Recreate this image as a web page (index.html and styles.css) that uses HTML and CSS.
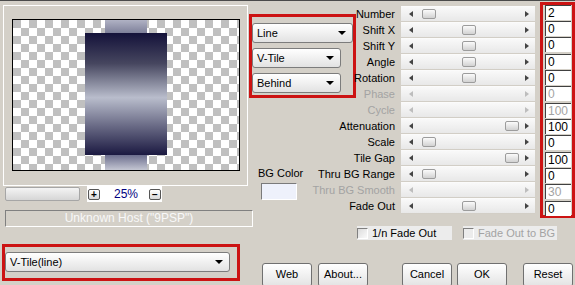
FILE: index.html
```html
<!DOCTYPE html>
<html lang="en">
<head>
    <meta charset="UTF-8">
    <meta name="viewport" content="width=device-width, initial-scale=1.0">
    <title>V-Tile</title>
    <link rel="stylesheet" href="styles.css">
</head>
<body>
    <div class="window">
        <div class="left">
            <div class="preview">
                <div class="canvas">
                    <div class="tile-top"></div>
                    <div class="tile-main"></div>
                    <div class="tile-bottom"></div>
                </div>
            </div>

            <div class="zoom-row">
                <div class="zoom-slider"></div>
                <div class="zoom-box">
                    <span class="zoom-btn">+</span>
                    <span class="zoom-value">25%</span>
                    <span class="zoom-btn zoom-minus">&minus;</span>
                </div>
            </div>

            <div class="host">Unknown Host ("9PSP")</div>

            <div class="mark preset-mark">
                <div class="combo combo-preset">V-Tile(line)</div>
            </div>
        </div>

        <div class="right">
            <div class="params">
                <div class="mid">
                    <div class="mark mode-mark">
                        <div class="combo combo-line">Line</div>
                        <div class="combo combo-short">V-Tile</div>
                        <div class="combo combo-short">Behind</div>
                    </div>
                    <div class="bg-color">
                        <span>BG Color</span>
                        <div class="swatch"></div>
                    </div>
                </div>

                <div class="labels">
                    <div class="label">Number</div>
                    <div class="label">Shift X</div>
                    <div class="label">Shift Y</div>
                    <div class="label">Angle</div>
                    <div class="label">Rotation</div>
                    <div class="label disabled">Phase</div>
                    <div class="label disabled">Cycle</div>
                    <div class="label">Attenuation</div>
                    <div class="label">Scale</div>
                    <div class="label">Tile Gap</div>
                    <div class="label">Thru BG Range</div>
                    <div class="label disabled">Thru BG Smooth</div>
                    <div class="label">Fade Out</div>
                </div>

                <div class="sliders">
                    <div class="slider"><i class="arrow-left"></i><div class="track"><span class="thumb" style="margin-left: 9px"></span></div><i class="arrow-right"></i></div>
                    <div class="slider"><i class="arrow-left"></i><div class="track"><span class="thumb" style="margin-left: 49px"></span></div><i class="arrow-right"></i></div>
                    <div class="slider"><i class="arrow-left"></i><div class="track"><span class="thumb" style="margin-left: 49px"></span></div><i class="arrow-right"></i></div>
                    <div class="slider"><i class="arrow-left"></i><div class="track"><span class="thumb" style="margin-left: 49px"></span></div><i class="arrow-right"></i></div>
                    <div class="slider"><i class="arrow-left"></i><div class="track"><span class="thumb" style="margin-left: 49px"></span></div><i class="arrow-right"></i></div>
                    <div class="slider disabled"><i class="arrow-left"></i><div class="track"></div><i class="arrow-right"></i></div>
                    <div class="slider disabled"><i class="arrow-left"></i><div class="track"></div><i class="arrow-right"></i></div>
                    <div class="slider"><i class="arrow-left"></i><div class="track"><span class="thumb" style="margin-left: 92px"></span></div><i class="arrow-right"></i></div>
                    <div class="slider"><i class="arrow-left"></i><div class="track"><span class="thumb" style="margin-left: 9px"></span></div><i class="arrow-right"></i></div>
                    <div class="slider"><i class="arrow-left"></i><div class="track"><span class="thumb" style="margin-left: 92px"></span></div><i class="arrow-right"></i></div>
                    <div class="slider"><i class="arrow-left"></i><div class="track"><span class="thumb" style="margin-left: 9px"></span></div><i class="arrow-right"></i></div>
                    <div class="slider disabled"><i class="arrow-left"></i><div class="track"></div><i class="arrow-right"></i></div>
                    <div class="slider"><i class="arrow-left"></i><div class="track"><span class="thumb" style="margin-left: 49px"></span></div><i class="arrow-right"></i></div>
                </div>

                <div class="mark values">
                    <div class="num">2</div>
                    <div class="num">0</div>
                    <div class="num">0</div>
                    <div class="num">0</div>
                    <div class="num">0</div>
                    <div class="num disabled">0</div>
                    <div class="num disabled">100</div>
                    <div class="num">100</div>
                    <div class="num">0</div>
                    <div class="num">100</div>
                    <div class="num">0</div>
                    <div class="num disabled">30</div>
                    <div class="num">0</div>
                </div>
            </div>

            <div class="checks">
                <label class="check"><span class="box"></span>1/n Fade Out</label>
                <label class="check check-bg disabled"><span class="box"></span>Fade Out to BG</label>
            </div>

            <div class="buttons">
                <button class="btn btn-web">Web</button>
                <button class="btn btn-about">About...</button>
                <button class="btn btn-cancel">Cancel</button>
                <button class="btn btn-ok">OK</button>
                <button class="btn btn-reset">Reset</button>
            </div>
        </div>
    </div>
</body>
</html>
```

FILE: styles.css
```css
html, body {
    margin: 0;
    padding: 0;
    height: 285px;
    overflow: hidden;
}
body {
    font-family: "Liberation Sans", Arial, sans-serif;
    font-size: 11px;
    color: #000;
    background-color: #d4d0c8;
}
.window {
    display: flex;
    height: 285px;
    box-sizing: border-box;
    border-top: 1px solid #4a4a4a;
}

/* left column */
.left {
    width: 249px;
    flex-shrink: 0;
    display: flex;
    flex-direction: column;
    align-items: flex-start;
}
.preview {
    margin: 4px 0 0 3px;
    width: 245px;
    height: 181px;
    box-sizing: border-box;
    border: 1px solid #fff;
    padding: 13px 7px 14px 8px;
}
.canvas {
    height: 100%;
    box-sizing: border-box;
    border: 1px solid #000;
    display: flex;
    flex-direction: column;
    align-items: center;
    background: conic-gradient(#fff 0 25%, #c0c0c0 0 50%, #fff 0 75%, #c0c0c0 0) 0 0 / 16px 16px;
}
.tile-top {
    width: 42px;
    height: 13px;
    background: linear-gradient(#b0b2c4, #7e809a);
}
.tile-main {
    width: 82px;
    height: 122px;
    background: linear-gradient(#14123a 0%, #46465f 25%, #b9bdcc 53%, #6a6b86 76%, #1b1941 100%);
}
.tile-bottom {
    width: 42px;
    height: 15px;
    background: linear-gradient(#6c6e8e, #c4c6d2);
}
.zoom-row {
    display: flex;
    align-items: center;
    height: 16px;
}
.zoom-slider {
    margin-left: 5px;
    width: 75px;
    height: 14px;
    box-sizing: border-box;
    border: 1px solid #a6a6a6;
    border-radius: 2px;
    background: linear-gradient(#f4f4f4, #d6d6d6);
}
.zoom-box {
    margin-left: 7px;
    width: 75px;
    height: 16px;
    background: #fff;
    display: flex;
    align-items: center;
}
.zoom-btn {
    margin-left: 1px;
    width: 12px;
    height: 11px;
    box-sizing: border-box;
    border: 1px solid #555;
    border-radius: 2px;
    background: linear-gradient(#fff, #d8d8d8);
    font-size: 10px;
    font-weight: bold;
    line-height: 9px;
    text-align: center;
}
.zoom-value {
    margin-left: 14px;
    color: #000080;
    font-size: 12px;
    line-height: 16px;
}
.zoom-minus {
    margin-left: 11px;
}
.host {
    margin: 8px 0 0 5px;
    width: 248px;
    height: 17px;
    box-sizing: border-box;
    border-top: 1px solid #808080;
    border-left: 1px solid #808080;
    border-bottom: 1px solid #fff;
    border-right: 1px solid #fff;
    color: #f8f8f8;
    font-size: 12px;
    line-height: 15px;
    text-align: center;
}

/* red annotation frames */
.mark {
    box-sizing: border-box;
    border: 3px solid #cc1313;
}
.preset-mark {
    margin: 17px 0 0 2px;
    width: 238px;
    height: 37px;
    padding-top: 5px;
}

/* drop-down boxes */
.combo {
    height: 20px;
    box-sizing: border-box;
    display: flex;
    align-items: center;
    justify-content: space-between;
    padding: 0 6px 0 4px;
    border: 1px solid #7c7c7c;
    border-radius: 3px;
    background: linear-gradient(#ffffff, #e2e2e2);
    line-height: 18px;
}
.combo::after {
    content: "";
    border-left: 4px solid transparent;
    border-right: 4px solid transparent;
    border-top: 4px solid #000;
}
.combo-preset {
    width: 225px;
}

/* right part */
.right {
    width: 326px;
    flex-shrink: 0;
    display: flex;
    flex-direction: column;
}
.params {
    display: flex;
    margin-top: 1px;
}
.mid {
    width: 107px;
    flex-shrink: 0;
    padding-top: 12px;
}
.mode-mark {
    width: 107px;
    height: 84px;
    padding-top: 6px;
}
.combo-line {
    width: 101px;
}
.combo-short {
    width: 89px;
    margin-top: 5px;
}
.bg-color {
    margin-top: 69px;
    display: flex;
    flex-direction: column;
    align-items: flex-start;
    padding-left: 9px;
    line-height: 13px;
}
.swatch {
    margin: 3px 0 0 3px;
    width: 36px;
    height: 17px;
    box-sizing: border-box;
    border-top: 1px solid #7a7a7a;
    border-left: 1px solid #7a7a7a;
    border-bottom: 1px solid #fff;
    border-right: 1px solid #fff;
    background: #eef1fb;
}
.labels {
    width: 45px;
    flex-shrink: 0;
    padding-top: 4px;
}
.label {
    height: 16px;
    line-height: 16px;
    display: flex;
    justify-content: flex-end;
    padding-right: 6px;
    white-space: nowrap;
}
.disabled {
    color: #a3a3a3;
}
.sliders {
    width: 134px;
    flex-shrink: 0;
    padding-top: 4px;
}
.slider {
    height: 16px;
    box-sizing: border-box;
    display: flex;
    align-items: center;
    border-top: 1px solid #fbfbfb;
    border-bottom: 1px solid #d2cec6;
    background: linear-gradient(#f9f9f9, #e8e8e8);
}
.arrow-left {
    margin-left: 8px;
    border-top: 3px solid transparent;
    border-bottom: 3px solid transparent;
    border-right: 4px solid #444;
}
.arrow-right {
    margin-right: 6px;
    border-top: 3px solid transparent;
    border-bottom: 3px solid transparent;
    border-left: 4px solid #444;
}
.slider.disabled .arrow-left {
    border-right-color: #bdbdbd;
}
.slider.disabled .arrow-right {
    border-left-color: #bdbdbd;
}
.track {
    flex: 1;
    display: flex;
    align-items: center;
}
.thumb {
    width: 14px;
    height: 10px;
    box-sizing: border-box;
    border: 1px solid #9c9c9c;
    border-radius: 2px;
    background: linear-gradient(#fbfbfb, #d2d2d2);
}
.values {
    margin-left: 5px;
    width: 35px;
    height: 216px;
    padding-left: 2px;
}
.num {
    width: 26px;
    height: 15px;
    margin-bottom: 1px;
    box-sizing: border-box;
    border-top: 1px solid #404040;
    border-left: 1px solid #404040;
    background: #fff;
    padding-left: 2px;
    font-size: 12px;
    line-height: 14px;
}
.num:nth-child(3n) {
    margin-bottom: 2px;
}

/* check boxes */
.checks {
    display: flex;
    margin: 8px 0 0 108px;
    height: 14px;
}
.check {
    width: 95px;
    display: flex;
    align-items: center;
    gap: 4px;
    background: #ececec;
    white-space: nowrap;
    line-height: 14px;
}
.check-bg {
    margin-left: 11px;
    width: 94px;
}
.box {
    width: 11px;
    height: 11px;
    box-sizing: border-box;
    border-top: 1px solid #808080;
    border-left: 1px solid #808080;
    border-bottom: 1px solid #fff;
    border-right: 1px solid #fff;
    background: linear-gradient(135deg, #dcdcdc, #fafafa);
}
.check-bg .box {
    background: #ececec;
}

/* buttons */
.buttons {
    display: flex;
    margin-top: 23px;
}
.btn {
    width: 50px;
    height: 24px;
    padding: 0 0 2px;
    font-family: inherit;
    font-size: 11px;
    line-height: 20px;
    color: #000;
    border: 1px solid #707070;
    border-radius: 3px;
    background: linear-gradient(#ffffff, #e3e3e3);
}
.btn-web {
    margin-left: 13px;
}
.btn-about {
    margin-left: 6px;
}
.btn-cancel {
    margin-left: 34px;
}
.btn-ok {
    margin-left: 5px;
}
.btn-reset {
    margin-left: 16px;
}
```
